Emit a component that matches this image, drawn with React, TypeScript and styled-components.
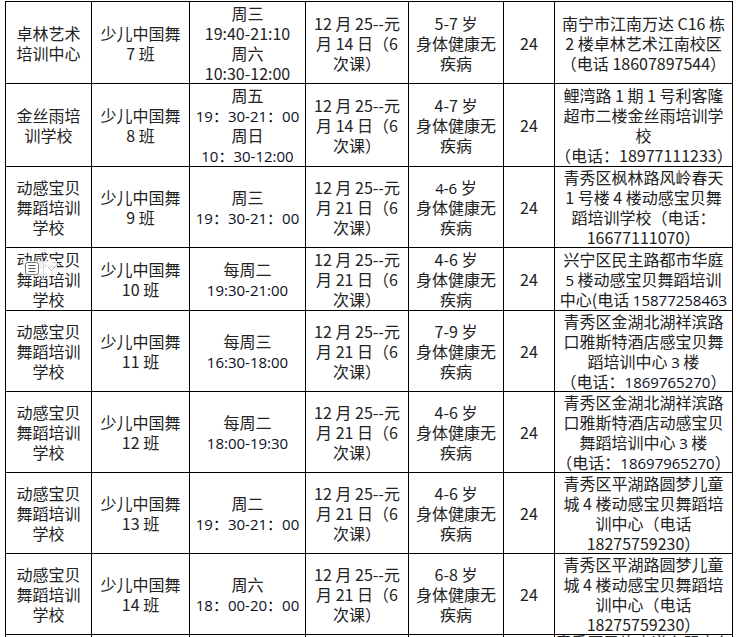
import React from "react";
import styled, { createGlobalStyle } from "styled-components";

const GlobalStyle = createGlobalStyle`
  html, body {
    margin: 0;
    padding: 0;
    background: #fff;
  }
`;

const Page = styled.div`
  height: 637px;
  overflow: hidden;
  padding: 1px 0 0 5px;
  box-sizing: border-box;
  background: #fff;
`;

const Sheet = styled.table`
  border-collapse: collapse;
  table-layout: fixed;
  width: 728px;
  font-family: "Noto Sans CJK SC", "Noto Sans", sans-serif;
  font-size: 16px;
  line-height: 20px;
  color: #222;
`;

const Col = styled.col<{ $w: number }>`
  width: ${({ $w }) => $w}px;
`;

const Row = styled.tr<{ $h: number }>`
  height: ${({ $h }) => $h}px;
`;

const Cell = styled.td<{ $top?: boolean }>`
  position: relative;
  border: 1px solid #000;
  padding: 0;
  text-align: center;
  vertical-align: ${({ $top }) => ($top ? "top" : "middle")};
  white-space: nowrap;
  overflow: hidden;
`;

const Lines = styled.div<{ $lift?: boolean }>`
  margin-top: ${({ $lift }) => ($lift ? "-3px" : "0")};
`;

const Line = styled.div`
  height: 20px;
`;

// runs typed in a different (cleartype) font in the original doc
const Latin = styled.span`
  font-family: "Open Sans", "Noto Sans CJK SC", sans-serif;
  font-size: 15px;
  color: #0b0f1e;
`;

const PasteTag = styled.div`
  position: absolute;
  left: 17px;
  top: 13px;
  display: flex;
  align-items: center;
  gap: 3px;
  padding: 0 1px;
  background: rgba(255, 255, 255, 0.85);
`;

const Divider = styled.span`
  width: 1px;
  height: 13px;
  background: #d8d8d8;
`;

const cols = [86, 98, 116, 103, 95, 51, 178];

type RowData = { h: number; cells: string[][]; tag?: boolean; topLast?: boolean };

const dates = (d: string) => ["12 月 25--元", `月 ${d} 日（6`, "次课）"];
const age = (a: string) => [a, "身体健康无", "疾病"];
const school = ["动感宝贝", "舞蹈培训", "学校"];

const rows: RowData[] = [
  {
    h: 82,
    cells: [
      ["卓林艺术", "培训中心"],
      ["少儿中国舞", "7 班"],
      ["周三", "19:40-21:10", "周六", "10:30-12:00"],
      dates("14"),
      age("5-7 岁"),
      ["24"],
      ["南宁市江南万达 C16 栋", "2 楼卓林艺术江南校区", "（电话 18607897544）"],
    ],
  },
  {
    h: 83,
    cells: [
      ["金丝雨培", "训学校"],
      ["少儿中国舞", "8 班"],
      ["周五", "[19：30-21：00]", "周日", "[10：30-12:00]"],
      dates("14"),
      age("4-7 岁"),
      ["24"],
      ["鲤湾路 1 期 1 号利客隆", "超市二楼金丝雨培训学", "校", "（电话：18977111233）"],
    ],
  },
  {
    h: 81,
    cells: [
      school,
      ["少儿中国舞", "9 班"],
      ["周三", "[19：30-21：00]"],
      dates("21"),
      age("[4-6] 岁"),
      ["24"],
      ["青秀区枫林路风岭春天", "1 号楼 4 楼动感宝贝舞", "蹈培训学校（电话：", "16677111070）"],
    ],
  },
  {
    h: 63,
    tag: true,
    cells: [
      school,
      ["少儿中国舞", "10 班"],
      ["每周二", "[19:30-21:00]"],
      dates("21"),
      age("4-6 岁"),
      ["24"],
      ["兴宁区民主路都市华庭", "[5] 楼动感宝贝舞蹈培训", "中心(电话 [15877258463]"],
    ],
  },
  {
    h: 81,
    cells: [
      school,
      ["少儿中国舞", "11 班"],
      ["每周三", "[16:30-18:00]"],
      dates("21"),
      age("7-9 岁"),
      ["24"],
      ["青秀区金湖北湖祥滨路", "口雅斯特酒店感宝贝舞", "蹈培训中心 [3] 楼", "（电话：[1869765270]）"],
    ],
  },
  {
    h: 81,
    cells: [
      school,
      ["少儿中国舞", "12 班"],
      ["每周二", "[18:00-19:30]"],
      dates("21"),
      age("4-6 岁"),
      ["24"],
      ["青秀区金湖北湖祥滨路", "口雅斯特酒店动感宝贝", "舞蹈培训中心 [3] 楼", "（电话：[18697965270]）"],
    ],
  },
  {
    h: 80,
    cells: [
      school,
      ["少儿中国舞", "13 班"],
      ["周二", "[19：30-21：00]"],
      dates("21"),
      age("4-6 岁"),
      ["24"],
      ["青秀区平湖路圆梦儿童", "城 4 楼动感宝贝舞蹈培", "训中心（电话", "18275759230）"],
    ],
  },
  {
    h: 79,
    cells: [
      school,
      ["少儿中国舞", "14 班"],
      ["周六", "[18：00-20：00]"],
      dates("21"),
      age("6-8 岁"),
      ["24"],
      ["青秀区平湖路圆梦儿童", "城 4 楼动感宝贝舞蹈培", "训中心（电话", "18275759230）"],
    ],
  },
  {
    h: 80,
    topLast: true,
    cells: [
      school,
      ["少儿中国舞", "15 班"],
      ["周日", "[10：00-11：30]"],
      dates("21"),
      age("4-6 岁"),
      ["24"],
      ["青秀区民族大道东盟商务", "区动感宝贝舞蹈培训", "中心（电话", "18275759230）"],
    ],
  },
];

const renderLine = (text: string) =>
  text.split(/(\[[^\]]*\])/).map((part, i) =>
    part.startsWith("[") ? <Latin key={i}>{part.slice(1, -1)}</Latin> : part
  );

const PasteIcon = () => (
  <PasteTag>
    <svg width="16" height="15" viewBox="0 0 16 15">
      <rect x="1.5" y="1.5" width="13" height="12" rx="2" fill="#fff" stroke="#777" />
      <path d="M4.5 4.5h7M4.5 7.5h7M4.5 10.5h7" stroke="#555" strokeWidth="1" />
    </svg>
    <Divider />
    <svg width="9" height="6" viewBox="0 0 9 6">
      <path d="M1 1l3.5 3.5L8 1" fill="none" stroke="#aaa" strokeWidth="1" />
    </svg>
  </PasteTag>
);

export default function App() {
  return (
    <Page>
      <GlobalStyle />
      <Sheet>
        <colgroup>
          {cols.map((w, i) => (
            <Col key={i} $w={w} />
          ))}
        </colgroup>
        <tbody>
          {rows.map((row, r) => (
            <Row key={r} $h={row.h}>
              {row.cells.map((lines, c) => {
                const top = row.topLast && c === 6;
                return (
                  <Cell key={c} $top={top}>
                    {row.tag && c === 0 && <PasteIcon />}
                    <Lines $lift={top}>
                      {lines.map((l, k) => (
                        <Line key={k}>{renderLine(l)}</Line>
                      ))}
                    </Lines>
                  </Cell>
                );
              })}
            </Row>
          ))}
        </tbody>
      </Sheet>
    </Page>
  );
}
